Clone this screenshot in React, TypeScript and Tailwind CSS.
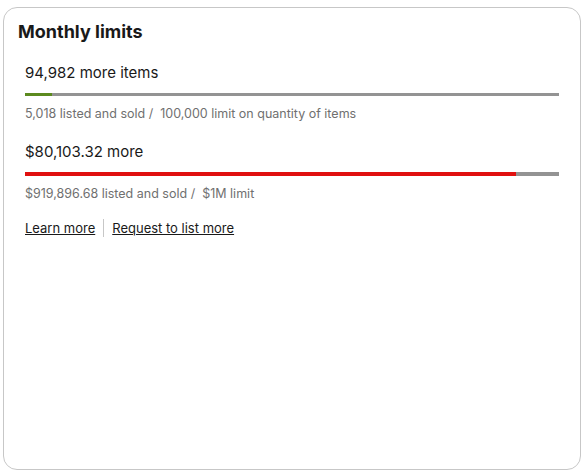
const limits = [
  {
    heading: '94,982 more items',
    used: 5018,
    total: 100000,
    color: 'bg-[#5c8a1f]',
    bar: 'h-[3px]',
    caption: '5,018 listed and sold /\u00a0 100,000 limit on quantity of items',
  },
  {
    heading: '$80,103.32 more',
    used: 919896.68,
    total: 1000000,
    color: 'bg-[#e0100f]',
    bar: 'h-[4px]',
    caption: '$919,896.68 listed and sold /\u00a0 $1M limit',
  },
];

export default function App() {
  return (
    <div className="h-[476px] w-[583px] bg-white pl-[3px] pt-[7px] font-['Inter',sans-serif]">
      <div className="h-[463px] w-[578px] rounded-[14px] border border-[#c7c7c7] px-[14px] pt-[12px]">
        <h2 className="text-[18px] font-bold leading-[24px] text-[#191919]">Monthly limits</h2>
        <div className="flex flex-col px-[7px] pt-[19px]">
          <div className="flex flex-col gap-[19px]">
            {limits.map((l) => (
              <div key={l.heading}>
                <div className="text-[15px] leading-[20px] text-[#191919]">{l.heading}</div>
                <div className={`mt-[10px] w-full bg-[#939393] ${l.bar}`}>
                  <div className={`h-full ${l.color}`} style={{ width: `${(l.used / l.total) * 100}%` }} />
                </div>
                <div className="mt-[9px] text-[12.5px] leading-[18px] text-[#707070]">{l.caption}</div>
              </div>
            ))}
          </div>
          <div className="mt-[16px] flex items-center text-[13px] leading-[18px] text-[#191919]">
            <a href="#" className="underline">Learn more</a>
            <span className="mx-[8px] h-[18px] w-px bg-[#c7c7c7]" />
            <a href="#" className="underline">Request to list more</a>
          </div>
        </div>
      </div>
    </div>
  );
}
